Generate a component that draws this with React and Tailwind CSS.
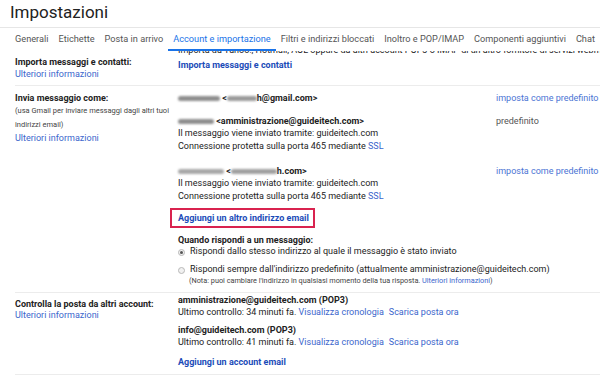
import React from "react";

const tabs = [
  "Generali",
  "Etichette",
  "Posta in arrivo",
  "Account e importazione",
  "Filtri e indirizzi bloccati",
  "Inoltro e POP/IMAP",
  "Componenti aggiuntivi",
  "Chat",
];

function Blob({ className }) {
  return (
    <span
      className={
        "inline-block h-[5px] rounded-full align-middle blur-[1px] " + className
      }
    />
  );
}

function Radio({ checked }) {
  return (
    <span className="flex h-[7px] w-[7px] shrink-0 items-center justify-center rounded-full border border-[#b8b8b8] bg-[#f1f1f1]">
      {checked ? <span className="h-[3px] w-[3px] rounded-full bg-[#555]" /> : null}
    </span>
  );
}

export default function App() {
  return (
    <div className="h-[381px] w-[600px] overflow-hidden bg-white font-['Roboto',sans-serif] text-[#222]">
      <div className="h-[28px] border-b border-[#e6e6e6] pl-[10px] pt-[1px] text-[17px] leading-[22px] text-[#222]">
        Impostazioni
      </div>

      <div className="flex h-[23px] pl-[10px] text-[9.2px] leading-[12px] whitespace-nowrap text-[#555]">
        {tabs.map((t) =>
          t === "Account e importazione" ? (
            <div
              key={t}
              className="shrink-0 border-b-2 border-[#1a73e8] px-[5px] pt-[5px] text-[#1a73e8]"
            >
              {t}
            </div>
          ) : (
            <div key={t} className="shrink-0 px-[5px] pt-[5px]">
              {t}
            </div>
          )
        )}
      </div>

      <div className="ml-[15px]">
        {/* Row 1 */}
        <div className="flex h-[35px] overflow-hidden border-b border-[#ececec]">
          <div className="w-[163px] shrink-0 pt-[5px] text-[9px] leading-[12px]">
            <div className="font-bold">Importa messaggi e contatti:</div>
            <div className="text-[#3b66cc]">Ulteriori informazioni</div>
          </div>
          <div className="min-w-0 flex-1 text-[9px] leading-[12px]">
            <div className="-mt-[7px] whitespace-nowrap">
              Importa da Yahoo!, Hotmail, AOL oppure da altri account POP3 o IMAP di un altro fornitore di servizi webmail.
            </div>
            <div className="mt-[3px] font-bold text-[#1a4bb8]">
              Importa messaggi e contatti
            </div>
          </div>
        </div>

        {/* Row 2 */}
        <div className="flex border-b border-[#ececec] pb-[7px]">
          <div className="w-[163px] shrink-0 pt-[6px]">
            <div className="text-[9px] font-bold leading-[12px]">Invia messaggio come:</div>
            <div className="whitespace-nowrap text-[7.5px] leading-[14px] text-[#444]">
              (usa Gmail per inviare messaggi dagli altri tuoi
              <br />
              indirizzi email)
            </div>
            <div className="text-[9px] leading-[12px] text-[#3b66cc]">Ulteriori informazioni</div>
          </div>

          <div className="min-w-0 flex-1 pt-[6px] text-[9px]">
            <div className="flex leading-[12px]">
              <div className="w-[318px] shrink-0 whitespace-nowrap font-bold">
                <Blob className="w-[42px] bg-[#8e8e8e]" /> &lt;
                <Blob className="w-[30px] bg-[#9a9a9a]" />h@gmail.com&gt;
              </div>
              <div className="whitespace-nowrap text-[#4b74d4]">imposta come predefinito</div>
            </div>

            <div className="mt-[11px] flex">
              <div className="w-[318px] shrink-0 whitespace-nowrap">
                <div className="font-bold leading-[12px]">
                  <Blob className="w-[36px] bg-[#8e8e8e]" /> &lt;amministrazione@guideitech.com&gt;
                </div>
                <div className="leading-[13px]">Il messaggio viene inviato tramite: guideitech.com</div>
                <div className="leading-[13px]">
                  Connessione protetta sulla porta 465 mediante <span className="text-[#3b66cc]">SSL</span>
                </div>
              </div>
              <div className="leading-[12px] text-[#555]">predefinito</div>
            </div>

            <div className="mt-[12px] flex">
              <div className="w-[318px] shrink-0 whitespace-nowrap">
                <div className="font-bold leading-[12px]">
                  <Blob className="w-[46px] bg-[#a8a8a8]" /> &lt;
                  <Blob className="w-[46px] bg-[#a0a0a0]" />h.com&gt;
                </div>
                <div className="leading-[13px]">Il messaggio viene inviato tramite: guideitech.com</div>
                <div className="leading-[13px]">
                  Connessione protetta sulla porta 465 mediante <span className="text-[#3b66cc]">SSL</span>
                </div>
              </div>
              <div className="whitespace-nowrap leading-[12px] text-[#4b74d4]">imposta come predefinito</div>
            </div>

            <div className="-ml-[8px] mt-[5px] h-[20px] w-[145px] whitespace-nowrap border-2 border-[#d9234f] pl-[6px] font-bold leading-[16px] text-[#1a4bb8]">
              Aggiungi un altro indirizzo email
            </div>

            <div className="mt-[6px] font-bold leading-[12px]">Quando rispondi a un messaggio:</div>
            <div className="flex h-[12px] items-center gap-[5px] whitespace-nowrap">
              <Radio checked />
              <span>Rispondi dallo stesso indirizzo al quale il messaggio è stato inviato</span>
            </div>
            <div className="mt-[6px] flex h-[12px] items-center gap-[5px] whitespace-nowrap">
              <Radio />
              <span>Rispondi sempre dall'indirizzo predefinito (attualmente amministrazione@guideitech.com)</span>
            </div>
            <div className="whitespace-nowrap pl-[11px] text-[7.3px] leading-[9px] text-[#444]">
              (Nota: puoi cambiare l'indirizzo in qualsiasi momento della tua risposta.{" "}
              <span className="text-[#3b66cc]">Ulteriori informazioni</span>)
            </div>
          </div>
        </div>

        {/* Row 3 */}
        <div className="flex h-[82px] border-b border-[#ececec]">
          <div className="w-[163px] shrink-0 pt-[6px] text-[9px] leading-[11px]">
            <div className="font-bold">Controlla la posta da altri account:</div>
            <div className="text-[#3b66cc]">Ulteriori informazioni</div>
          </div>
          <div className="min-w-0 flex-1 whitespace-nowrap pt-[2px] text-[9px]">
            <div className="font-bold leading-[11px]">amministrazione@guideitech.com (POP3)</div>
            <div className="leading-[12px]">
              Ultimo controllo: 34 minuti fa.{" "}
              <span className="text-[#3b66cc]">Visualizza cronologia</span>
              <span className="ml-[5px] text-[#3b66cc]">Scarica posta ora</span>
            </div>
            <div className="mt-[7px] font-bold leading-[11px]">info@guideitech.com (POP3)</div>
            <div className="leading-[12px]">
              Ultimo controllo: 41 minuti fa.{" "}
              <span className="text-[#3b66cc]">Visualizza cronologia</span>
              <span className="ml-[5px] text-[#3b66cc]">Scarica posta ora</span>
            </div>
            <div className="mt-[9px] font-bold leading-[11px] text-[#1a4bb8]">Aggiungi un account email</div>
          </div>
        </div>
      </div>
    </div>
  );
}
